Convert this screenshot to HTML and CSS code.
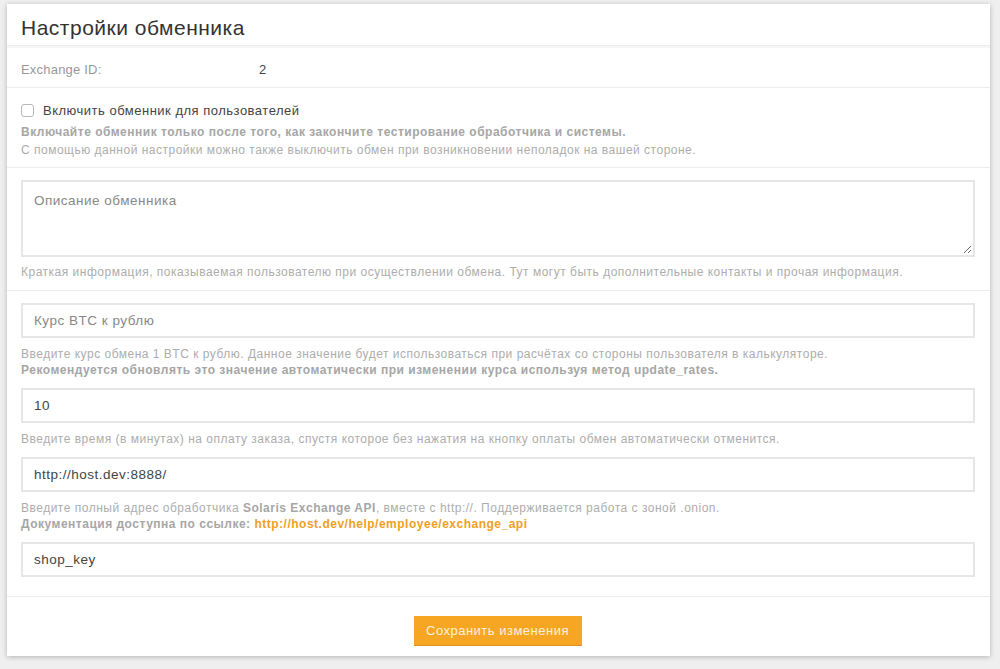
FILE: index.html
```html
<!DOCTYPE html>
<html lang="ru">
<head>
<meta charset="utf-8">
<title>Настройки обменника</title>
<link rel="stylesheet" href="styles.css">
</head>
<body>
<div class="card">
  <div class="card-header">Настройки обменника</div>
  <div class="row id-row">
    <span class="id-label">Exchange ID:</span>
    <span class="id-value">2</span>
  </div>
  <div class="row check-row">
    <label class="check-label"><span class="checkbox"></span>Включить обменник для пользователей</label>
    <p class="help help-bold first">Включайте обменник только после того, как закончите тестирование обработчика и системы.</p>
    <p class="help">С помощью данной настройки можно также выключить обмен при возникновении неполадок на вашей стороне.</p>
  </div>
  <div class="row area-row">
    <div class="textarea">Описание обменника<span class="grip"></span></div>
    <p class="help">Краткая информация, показываемая пользователю при осуществлении обмена. Тут могут быть дополнительные контакты и прочая информация.</p>
  </div>
  <div class="row fields-row">
    <div class="input placeholder">Курс BTC к рублю</div>
    <p class="help">Введите курс обмена 1 BTC к рублю. Данное значение будет использоваться при расчётах со стороны пользователя в калькуляторе.</p>
    <p class="help help-bold">Рекомендуется обновлять это значение автоматически при изменении курса используя метод update_rates.</p>
    <div class="input">10</div>
    <p class="help">Введите время (в минутах) на оплату заказа, спустя которое без нажатия на кнопку оплаты обмен автоматически отменится.</p>
    <div class="input">http://host.dev:8888/</div>
    <p class="help">Введите полный адрес обработчика <b>Solaris Exchange API</b>, вместе с http://. Поддерживается работа с зоной .onion.</p>
    <p class="help help-bold">Документация доступна по ссылке: <a class="link" href="#">http://host.dev/help/employee/exchange_api</a></p>
    <div class="input">shop_key</div>
  </div>
  <div class="footer">
    <button class="btn">Сохранить изменения</button>
  </div>
</div>
</body>
</html>
```

FILE: styles.css
```css
html, body {
  margin: 0;
  padding: 0;
}
body {
  background: #efefef;
  font-family: "Liberation Sans", Arial, sans-serif;
  color: #444;
  padding: 4px 10px 12px 7px;
  height: 669px;
  box-sizing: border-box;
}
.card {
  width: 983px;
  background: #fff;
  box-shadow: 0 1px 5px rgba(0, 0, 0, 0.25);
}
.card-header {
  height: 42px;
  box-sizing: border-box;
  display: flex;
  align-items: center;
  padding: 7px 14px 0;
  font-size: 21px;
  letter-spacing: 0.5px;
  color: #333;
  border-bottom: 1px solid #ececec;
  box-shadow: 0 2px 0 #f6f6f6;
}
.row {
  padding: 0 15px 0 14px;
  border-bottom: 1px solid #ececec;
}
.id-row {
  height: 42px;
  box-sizing: border-box;
  padding-top: 5px;
  display: flex;
  align-items: center;
  font-size: 13px;
  letter-spacing: 0.2px;
}
.id-label {
  width: 238px;
  color: #999;
}
.id-value {
  color: #444;
}
.check-row {
  padding-top: 14px;
  padding-bottom: 8px;
}
.check-label {
  display: flex;
  align-items: center;
  font-size: 13px;
  letter-spacing: 0.5px;
  color: #444;
  height: 16px;
}
.checkbox {
  width: 11px;
  height: 11px;
  border: 1px solid #b8b8b8;
  border-radius: 3px;
  margin-right: 9px;
  background: #fff;
}
.help {
  margin: 0;
  font-size: 12px;
  line-height: 17px;
  color: #adadad;
  letter-spacing: 0.5px;
}
.help-bold, .help b {
  font-weight: bold;
  color: #a6a6a6;
}
.check-row .first {
  margin-top: 5px;
}
.check-row .help {
  line-height: 18px;
}
.area-row {
  padding-top: 12px;
  padding-bottom: 9px;
}
.textarea {
  position: relative;
  border: 2px solid #e6e6e6;
  padding: 11px 11px 0;
  box-sizing: border-box;
  height: 77px;
  font-size: 13.5px;
  letter-spacing: 0.5px;
  color: #888;
  margin-bottom: 7px;
}
.grip {
  position: absolute;
  right: 2px;
  bottom: 2px;
  width: 7px;
  height: 7px;
  background: linear-gradient(135deg, transparent 45%, #666 45%, #666 55%, transparent 55%, transparent 75%, #666 75%, #666 85%, transparent 85%);
}
.fields-row {
  padding-top: 12px;
  padding-bottom: 11px;
}
.input {
  height: 35px;
  border: 2px solid #e6e6e6;
  box-sizing: border-box;
  padding: 0 11px;
  display: flex;
  align-items: center;
  font-size: 13.5px;
  letter-spacing: 0.5px;
  color: #444;
  margin-bottom: 8px;
}
.input.placeholder {
  color: #888;
}
.fields-row .help + .input {
  margin-top: 10px;
}
.fields-row .help {
  line-height: 16px;
}
.link {
  color: #efa023;
  text-decoration: none;
}
.footer {
  display: flex;
  justify-content: center;
  align-items: flex-start;
  padding: 19px 2px 10px 0;
}
.btn {
  background: #f6a623;
  border: none;
  border-bottom: 1px solid #e0921a;
  color: #fdf1dc;
  font-family: "Liberation Sans", Arial, sans-serif;
  font-size: 13px;
  letter-spacing: 0.5px;
  height: 30px;
  width: 168px;
  padding: 0;
}
```
